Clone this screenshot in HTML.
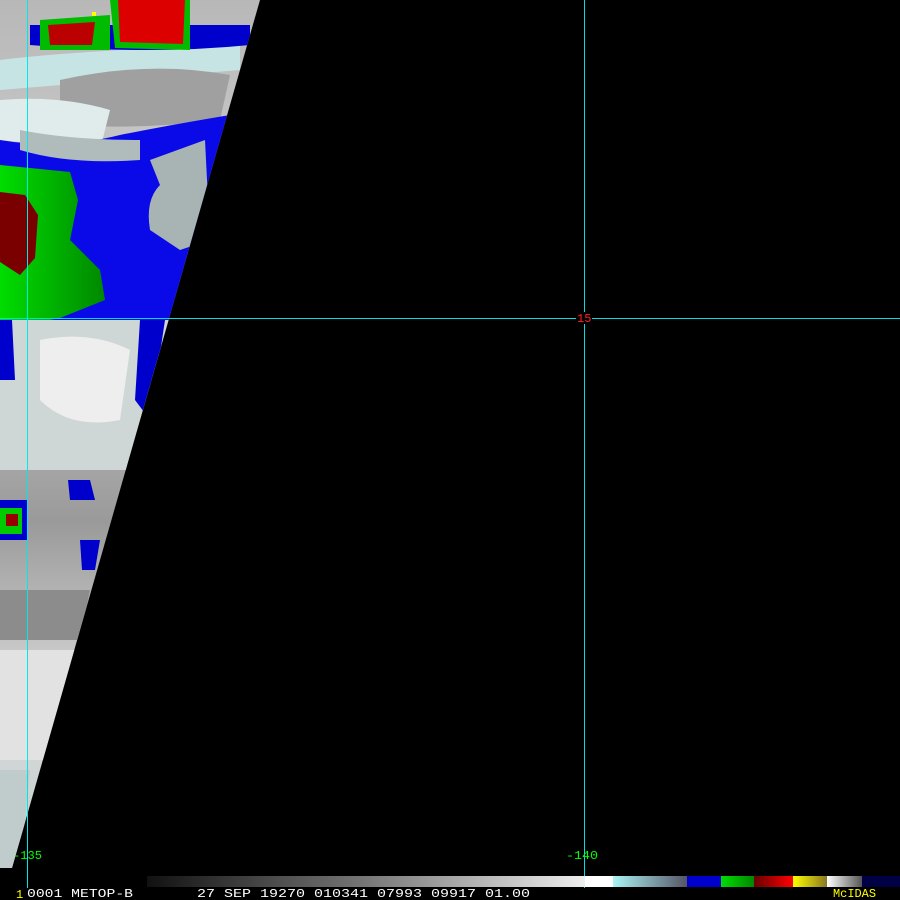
<!DOCTYPE html>
<html><head><style>
html,body{margin:0;padding:0;background:#000;width:900px;height:900px;overflow:hidden}
svg{display:block}
text{font-family:"Liberation Mono","DejaVu Sans Mono",monospace;font-size:12px}
</style></head><body>
<svg width="900" height="900" viewBox="0 0 900 900" xmlns="http://www.w3.org/2000/svg">
<defs>
<clipPath id="sw"><polygon points="0,0 260,0 12,868 0,868"/></clipPath>
<linearGradient id="gb" x1="0" x2="1"><stop offset="0" stop-color="#111"/><stop offset="0.5" stop-color="#777"/><stop offset="1" stop-color="#eee"/></linearGradient>
<linearGradient id="cb" x1="0" x2="1"><stop offset="0" stop-color="#aaf4f4"/><stop offset="1" stop-color="#556"/></linearGradient>
<linearGradient id="rb" x1="0" x2="1"><stop offset="0" stop-color="#600"/><stop offset="1" stop-color="#f00"/></linearGradient>
<linearGradient id="yb" x1="0" x2="1"><stop offset="0" stop-color="#ff0"/><stop offset="1" stop-color="#887722"/></linearGradient>
<linearGradient id="wb" x1="0" x2="1"><stop offset="0" stop-color="#fff"/><stop offset="1" stop-color="#555"/></linearGradient>
<linearGradient id="gr" x1="0" x2="1"><stop offset="0" stop-color="#00dd00"/><stop offset="1" stop-color="#008800"/></linearGradient>
<linearGradient id="vg" x1="0" y1="0" x2="0" y2="1"><stop offset="0" stop-color="#b8b8b8"/><stop offset="0.3" stop-color="#d0d0d0"/><stop offset="0.6" stop-color="#9a9a9a"/><stop offset="0.8" stop-color="#d8d8d8"/><stop offset="1" stop-color="#c4d0d0"/></linearGradient>
</defs>
<rect width="900" height="900" fill="#000"/>
<g clip-path="url(#sw)">
<rect x="0" y="0" width="270" height="870" fill="url(#vg)"/>
<path d="M0 60 Q80 50 240 45 L240 70 Q120 80 0 90Z" fill="#c6e4e4"/>
<path d="M60 80 Q150 60 230 75 L220 120 Q140 130 60 125Z" fill="#a0a0a0"/>
<path d="M0 100 Q60 95 110 110 L100 150 L0 140Z" fill="#e0ecec"/>
<path d="M30 25 L250 25 L250 45 Q150 55 30 45Z" fill="#0000cc"/>
<path d="M0 140 Q60 150 120 135 Q170 125 230 115 L230 320 L0 320Z" fill="#0a0ae8"/>
<path d="M150 160 L205 140 L210 240 L180 250 L150 230 Q145 200 160 185Z" fill="#a8b4b4"/>
<path d="M20 130 Q70 140 140 140 L140 160 Q70 165 20 150Z" fill="#b0bcbc"/>
<path d="M0 165 L70 172 L78 200 L70 240 L100 270 L105 300 L60 318 L0 330Z" fill="url(#gr)"/>
<path d="M0 192 L25 195 L38 215 L35 258 L20 275 L0 262Z" fill="#7a0000"/>
<path d="M40 20 L110 15 L110 50 L40 50Z" fill="#00bb00"/>
<path d="M48 25 L95 22 L92 45 L50 45Z" fill="#bb0000"/>
<path d="M110 0 L190 0 L190 50 L115 48Z" fill="#00bb00"/>
<path d="M118 0 L185 0 L183 44 L120 42Z" fill="#dd0000"/>
<rect x="92" y="12" width="4" height="4" fill="#ff0"/>
<path d="M0 320 L170 320 L150 470 L0 470Z" fill="#cfd6d6"/>
<path d="M40 340 Q90 330 130 350 L120 420 Q70 430 40 400Z" fill="#eee"/>
<path d="M0 320 L12 320 L15 380 L0 380Z" fill="#0000cc"/>
<path d="M140 320 L165 320 L150 420 L135 400Z" fill="#0000cc"/>
<rect x="0" y="500" width="28" height="40" fill="#0000cc"/>
<rect x="0" y="508" width="22" height="26" fill="#00cc00"/>
<rect x="6" y="514" width="12" height="12" fill="#990000"/>
<path d="M68 480 L90 480 L95 500 L70 500Z" fill="#0000cc"/>
<path d="M80 540 L100 540 L95 570 L82 570Z" fill="#0000cc"/>
<path d="M0 590 L90 590 L80 640 L0 640Z" fill="#8c8c8c"/>
<path d="M0 650 L80 650 L60 760 L0 760Z" fill="#e2e2e2"/>
<path d="M0 770 L30 770 L20 868 L0 868Z" fill="#c0cccc"/>
</g>
<line x1="0" y1="318.5" x2="900" y2="318.5" stroke="#00e0e0" stroke-width="1"/>
<line x1="27.5" y1="0" x2="27.5" y2="888" stroke="#00e8e8" stroke-width="1"/>
<line x1="584.5" y1="0" x2="584.5" y2="888" stroke="#00e0e0" stroke-width="1"/>
<rect x="576" y="312" width="16" height="12" fill="#000"/>
<text x="577" y="322" fill="#ff2020">15</text>
<text x="13" y="859" fill="#00ff00" textLength="29" lengthAdjust="spacingAndGlyphs">-135</text>
<text x="566" y="859" fill="#00ff00" textLength="32" lengthAdjust="spacingAndGlyphs">-140</text>
<rect x="147" y="876" width="438" height="11" fill="url(#gb)"/>
<rect x="585" y="876" width="28" height="11" fill="#fff"/>
<rect x="613" y="876" width="74" height="11" fill="url(#cb)"/>
<rect x="687" y="876" width="34" height="11" fill="#0000cc"/>
<rect x="721" y="876" width="33" height="11" fill="url(#gr)"/>
<rect x="754" y="876" width="39" height="11" fill="url(#rb)"/>
<rect x="793" y="876" width="34" height="11" fill="url(#yb)"/>
<rect x="827" y="876" width="35" height="11" fill="url(#wb)"/>
<rect x="862" y="876" width="38" height="11" fill="#000044"/>
<text x="16" y="898" fill="#ffff00" font-size="10">1</text>
<text x="27" y="897" fill="#fff" font-size="13" textLength="106" lengthAdjust="spacingAndGlyphs">0001 METOP-B</text>
<text x="197" y="897" fill="#fff" font-size="13" textLength="333" lengthAdjust="spacingAndGlyphs">27 SEP 19270 010341 07993 09917 01.00</text>
<text x="833" y="897" fill="#ffff00" font-size="13" textLength="43" lengthAdjust="spacingAndGlyphs">McIDAS</text>
</svg>
</body></html>
